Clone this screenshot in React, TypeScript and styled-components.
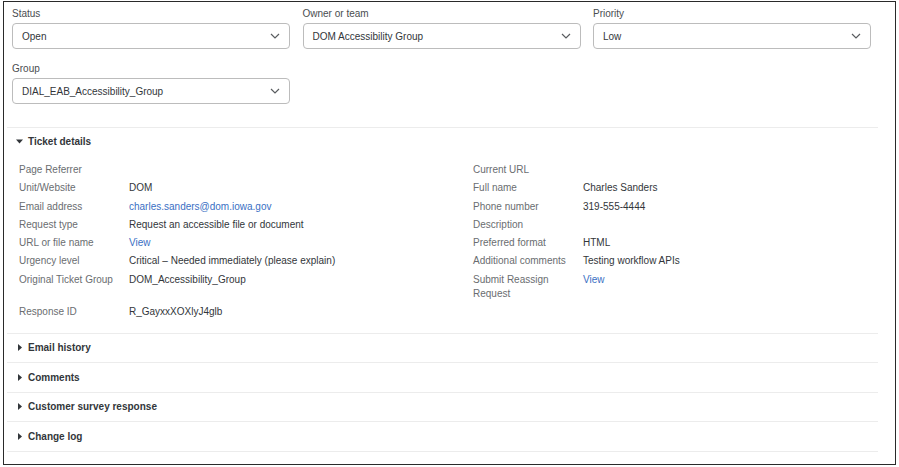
import React from 'react';
import styled, { createGlobalStyle } from 'styled-components';

const GlobalStyle = createGlobalStyle`
  body {
    margin: 0;
    background: #ffffff;
    font-family: "Liberation Sans", Arial, sans-serif;
    color: #32363a;
  }
`;

// frame around the whole panel
const Frame = styled.div`
  box-sizing: border-box;
  width: 893px;
  height: 464px;
  margin: 1px 0 0 3px;
  border: 1.5px solid #2a2a2a;
  padding: 0 17px 0 3px;
  overflow: hidden;
`;

const Filters = styled.div`
  display: grid;
  grid-template-columns: repeat(3, 278px);
  column-gap: 12.5px;
  row-gap: 13px;
  padding: 5px 5px 23px;
`;

const Field = styled.div`
  display: flex;
  flex-direction: column;
  gap: 3px;
`;

const FieldLabel = styled.label`
  font-size: 10px;
  line-height: 13px;
  color: #4a4d50;
`;

const Select = styled.div`
  box-sizing: border-box;
  height: 26px;
  display: flex;
  align-items: center;
  justify-content: space-between;
  padding: 0 9px 0 9px;
  border: 1px solid #bcbcbc;
  border-radius: 4px;
  font-size: 10px;
  color: #32363a;
  background: #fff;
`;

const Section = styled.div`
  border-top: 1px solid #ececec;
  &:last-child {
    border-bottom: 1px solid #ececec;
  }
`;

const SectionHeader = styled.div<{ $height?: number }>`
  height: ${({ $height }) => $height ?? 28.5}px;
  display: flex;
  align-items: center;
  gap: 5px;
  padding-left: 9px;
  font-size: 10px;
  font-weight: bold;
  color: #32363a;
`;

const Arrow = styled.svg`
  width: 7px;
  height: 7px;
  flex: none;
`;

const DetailsGrid = styled.div`
  display: grid;
  grid-template-columns: 454px 1fr;
  padding: 6px 0 11px 12px;
`;

const Detail = styled.div`
  display: grid;
  grid-template-columns: 110px 1fr;
  padding: 2px 0;
  font-size: 10px;
  line-height: 14.3px;
`;

const DetailLabel = styled.span`
  color: #6a6d70;
  padding-right: 12px;
`;

const DetailValue = styled.span<{ $link?: boolean }>`
  color: ${({ $link }) => ($link ? '#3a6fc4' : '#32363a')};
`;

const Chevron = () => (
  <svg width="10" height="6" viewBox="0 0 10 6">
    <path d="M1 1l4 4 4-4" fill="none" stroke="#5a5d60" strokeWidth="1.2" />
  </svg>
);

const filters = [
  { label: 'Status', value: 'Open' },
  { label: 'Owner or team', value: 'DOM Accessibility Group' },
  { label: 'Priority', value: 'Low' },
  { label: 'Group', value: 'DIAL_EAB_Accessibility_Group' },
];

const details: { label: string; value?: string; link?: boolean }[] = [
  { label: 'Page Referrer' },
  { label: 'Current URL' },
  { label: 'Unit/Website', value: 'DOM' },
  { label: 'Full name', value: 'Charles Sanders' },
  { label: 'Email address', value: 'charles.sanders@dom.iowa.gov', link: true },
  { label: 'Phone number', value: '319-555-4444' },
  { label: 'Request type', value: 'Request an accessible file or document' },
  { label: 'Description' },
  { label: 'URL or file name', value: 'View', link: true },
  { label: 'Preferred format', value: 'HTML' },
  { label: 'Urgency level', value: 'Critical – Needed immediately (please explain)' },
  { label: 'Additional comments', value: 'Testing workflow APIs' },
  { label: 'Original Ticket Group', value: 'DOM_Accessibility_Group' },
  { label: 'Submit Reassign Request', value: 'View', link: true },
  { label: 'Response ID', value: 'R_GayxxXOXlyJ4glb' },
];

const collapsed = ['Email history', 'Comments', 'Customer survey response', 'Change log'];

const App: React.FC = () => {
  return (
    <>
      <GlobalStyle />
      <Frame>
        <Filters>
          {filters.map((f) => (
            <Field key={f.label}>
              <FieldLabel>{f.label}</FieldLabel>
              <Select>
                <span>{f.value}</span>
                <Chevron />
              </Select>
            </Field>
          ))}
        </Filters>

        <Section>
          <SectionHeader $height={27}>
            <Arrow viewBox="0 0 7 7">
              <path d="M0 1.5h7L3.5 5.5z" fill="#32363a" />
            </Arrow>
            Ticket details
          </SectionHeader>
          <DetailsGrid>
            {details.map((d) => (
              <Detail key={d.label}>
                <DetailLabel>{d.label}</DetailLabel>
                <DetailValue $link={d.link}>{d.value}</DetailValue>
              </Detail>
            ))}
          </DetailsGrid>
        </Section>

        {collapsed.map((title) => (
          <Section key={title}>
            <SectionHeader>
              <Arrow viewBox="0 0 7 7">
                <path d="M2 0v7l4-3.5z" fill="#32363a" />
              </Arrow>
              {title}
            </SectionHeader>
          </Section>
        ))}
      </Frame>
    </>
  );
};

export default App;
